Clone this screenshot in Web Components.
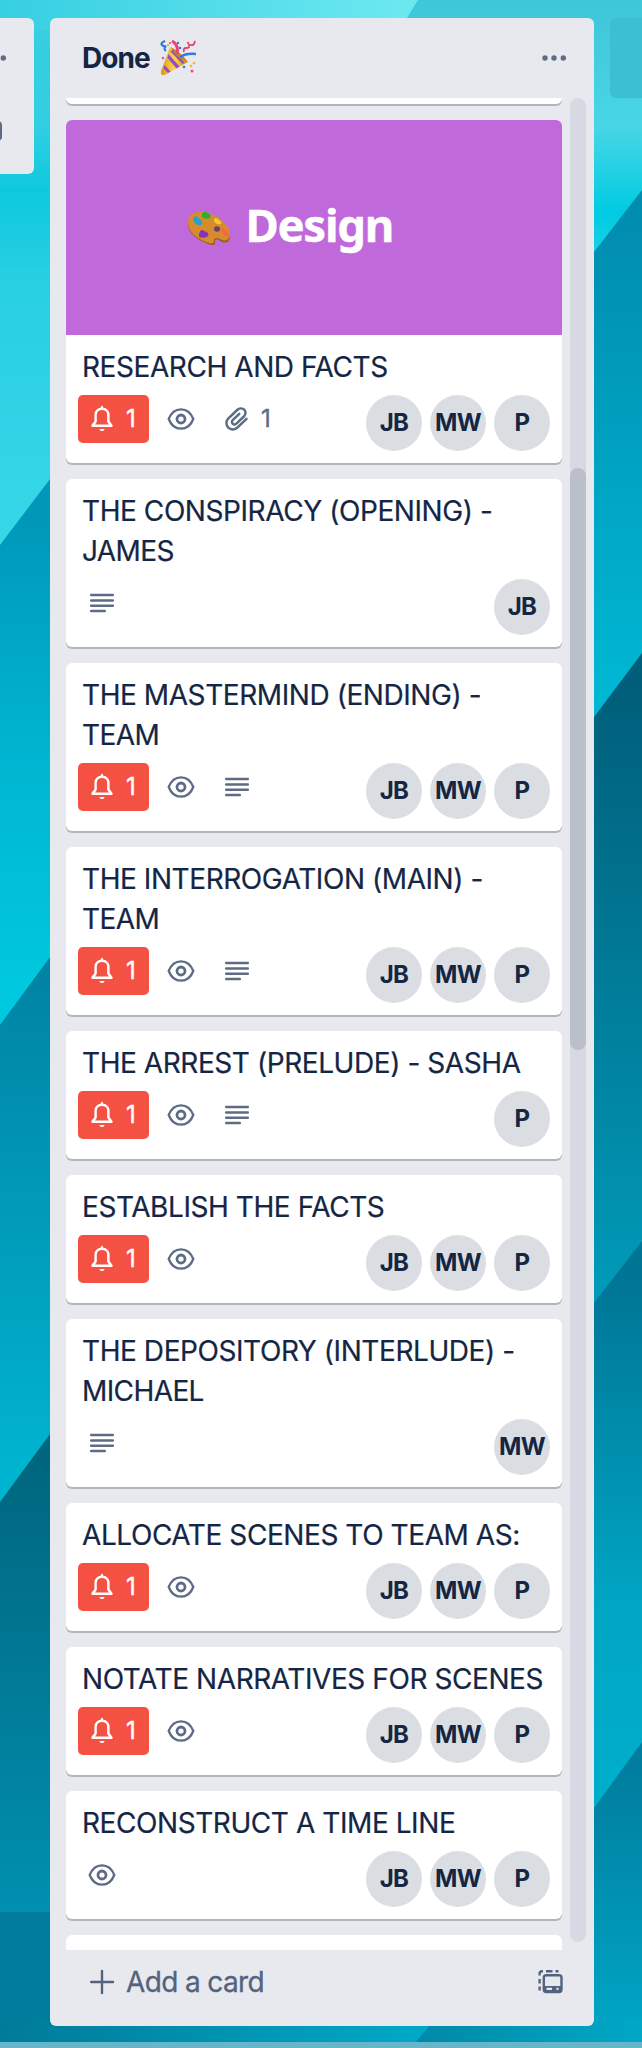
<!DOCTYPE html>
<html lang="en">
<head>
<meta charset="utf-8">
<title>Done list</title>
<style>
html,body{margin:0;padding:0}
body{width:642px;height:2048px;overflow:hidden;font-family:Inter,"Liberation Sans",sans-serif;color:#142644}
</style>
</head>
<body>
<board-view>
  <list-edge></list-edge>
  <board-list heading="Done">
    <board-card blank></board-card>
    <board-card cover="Design" lines="RESEARCH AND FACTS" badges="bell eye clip" members="JB MW P"></board-card>
    <board-card lines="THE CONSPIRACY (OPENING) -|JAMES" badges="text" members="JB"></board-card>
    <board-card lines="THE MASTERMIND (ENDING) -|TEAM" badges="bell eye text" members="JB MW P"></board-card>
    <board-card lines="THE INTERROGATION (MAIN) -|TEAM" badges="bell eye text" members="JB MW P"></board-card>
    <board-card lines="THE ARREST (PRELUDE) - SASHA" badges="bell eye text" members="P"></board-card>
    <board-card lines="ESTABLISH THE FACTS" badges="bell eye" members="JB MW P"></board-card>
    <board-card lines="THE DEPOSITORY (INTERLUDE) -|MICHAEL" badges="text" members="MW"></board-card>
    <board-card lines="ALLOCATE SCENES TO TEAM AS:" badges="bell eye" members="JB MW P"></board-card>
    <board-card lines="NOTATE NARRATIVES FOR SCENES" badges="bell eye" members="JB MW P"></board-card>
    <board-card lines="RECONSTRUCT A TIME LINE" badges="eye" members="JB MW P"></board-card>
    <board-card blank></board-card>
  </board-list>
  <add-list></add-list>
</board-view>
<script>
const icons = {
  bell:`<svg width="32" height="32" viewBox="0 0 32 32" fill="none" stroke="currentColor" stroke-width="2.400" stroke-linejoin="round" stroke-linecap="round"><path d="M16 4.300v1.400M6.500 22.800h19L22.400 18.500V11.600C22.400 8 19.600 5.700 16 5.700S9.600 8 9.600 11.600V18.500Z"/><path d="M13.400 26h5.200c-.5 1.500-1.400 2-2.600 2s-2.100-.5-2.600-2Z" fill="currentColor" stroke="none"/></svg>`,
  eye:`<svg width="32" height="32" viewBox="0 0 32 32" fill="none" stroke="currentColor"><path d="M3.700 16C6 10 10.500 6.300 16 6.300S26 10 28.300 16C26 22 21.500 25.700 16 25.700S6 22 3.700 16Z" stroke-width="2.300"/><circle cx="16" cy="16" r="4" stroke-width="2.800"/></svg>`,
  text:`<svg width="32" height="32" viewBox="0 0 32 32" fill="none" stroke="currentColor" stroke-width="2.500" stroke-linecap="round"><path d="M5.200 8h21.600M5.200 13.400h21.600M5.200 18.700h21.600M5.200 24h13.600"/></svg>`,
  clip:`<svg width="32" height="32" viewBox="0 0 32 32" fill="none" stroke="currentColor" stroke-width="2.500" stroke-linecap="round"><path d="M25.500 15.800L16.600 24.300C14 27 9.800 27.200 7.300 24.700S4.700 18 7.400 15.400L16.200 7C18.200 5.100 21.200 4.800 23.200 6.600S24.800 11.600 22.900 13.500L15.400 20.600C14.200 21.700 12.600 21.700 11.600 20.700S10.700 18 11.900 16.900L18.300 10.800"/></svg>`
};
const define = (name, render) => customElements.define(name, class extends HTMLElement {
  connectedCallback(){ if(!this.shadowRoot) this.attachShadow({mode:'open'}).innerHTML = render(this); }
});

define('board-view', () => `
<style>
:host{display:block;position:relative;width:642px;height:2048px;overflow:hidden;isolation:isolate}
.bg{position:absolute;inset:0;z-index:-1;display:block}
.row{display:grid;grid-template-columns:34px 544px 32px;column-gap:16px;padding-top:18px;align-items:start}
</style>
<svg class="bg" width="642" height="2048" viewBox="0 0 642 2048" preserveAspectRatio="none">
<defs>
<linearGradient id="t" gradientUnits="userSpaceOnUse" x1="0" x2="642" y1="0" y2="0"><stop offset="0" stop-color="#36cfe2"/><stop offset=".62" stop-color="#6be8f0"/><stop offset="1" stop-color="#5fe0ea"/></linearGradient>
<linearGradient id="a" gradientUnits="userSpaceOnUse" x1="0" x2="0" y1="0" y2="560"><stop stop-color="#38cee0"/><stop offset=".22" stop-color="#32cfe2"/><stop offset=".34" stop-color="#0ec9de"/><stop offset=".5" stop-color="#28cfe2"/><stop offset="1" stop-color="#38d8e8"/></linearGradient>
<linearGradient id="b" gradientUnits="userSpaceOnUse" x1="0" x2="0" y1="510" y2="980"><stop stop-color="#0097b9"/><stop offset=".5" stop-color="#00b4d0"/><stop offset="1" stop-color="#00c8de"/></linearGradient>
<linearGradient id="c" gradientUnits="userSpaceOnUse" x1="0" x2="0" y1="980" y2="1470"><stop stop-color="#0084a4"/><stop offset="1" stop-color="#00b4d0"/></linearGradient>
<linearGradient id="d" gradientUnits="userSpaceOnUse" x1="0" x2="0" y1="1460" y2="1912"><stop stop-color="#00667f"/><stop offset="1" stop-color="#0090b0"/></linearGradient>
<linearGradient id="e" gradientUnits="userSpaceOnUse" x1="0" x2="0" y1="0" y2="250"><stop stop-color="#3ec6d9"/><stop offset=".5" stop-color="#48d6e6"/><stop offset=".85" stop-color="#00cbe2"/><stop offset="1" stop-color="#18d0e5"/></linearGradient>
<linearGradient id="f" gradientUnits="userSpaceOnUse" x1="0" x2="0" y1="220" y2="700"><stop stop-color="#008db0"/><stop offset="1" stop-color="#00b8d4"/></linearGradient>
<linearGradient id="g" gradientUnits="userSpaceOnUse" x1="0" x2="0" y1="680" y2="1290"><stop stop-color="#005e7a"/><stop offset="1" stop-color="#009ab8"/></linearGradient>
<linearGradient id="h" gradientUnits="userSpaceOnUse" x1="0" x2="0" y1="1270" y2="1790"><stop stop-color="#007494"/><stop offset=".65" stop-color="#00a6c4"/><stop offset="1" stop-color="#00aecb"/></linearGradient>
<linearGradient id="i" gradientUnits="userSpaceOnUse" x1="0" x2="0" y1="1770" y2="2048"><stop stop-color="#007e9f"/><stop offset="1" stop-color="#00a8c8"/></linearGradient>
<linearGradient id="j" x2="1"><stop stop-color="#007b99"/><stop offset="1" stop-color="#00aac9"/></linearGradient>
<linearGradient id="k" x2="1"><stop stop-color="#0088a7"/><stop offset="1" stop-color="#00a8c6"/></linearGradient>
</defs>
<path fill="url(#a)" d="M0 0H420V560H0Z"/><path fill="url(#t)" d="M0 0H418L400 30H0Z"/>
<path fill="url(#b)" d="M0 545L50 479H100V1040H0Z"/>
<path fill="url(#c)" d="M0 1025L50 957H100V1520H0Z"/>
<path fill="url(#d)" d="M0 1502L50 1434H100V1914H0Z"/>
<path fill="#007d9c" d="M0 1912H320V2048H0Z"/>
<path fill="url(#e)" d="M418 0H642V300H400V30Z"/>
<path fill="url(#f)" d="M594 252L642 190V730H590V257Z"/>
<path fill="url(#g)" d="M594 717L642 653V1320H590V722Z"/>
<path fill="url(#h)" d="M594 1303L642 1241V1830H590V1308Z"/>
<path fill="url(#i)" d="M594 1808L642 1742V2048H590V1813Z"/>
<path fill="url(#j)" d="M0 2020H440V2048H0Z"/><path fill="url(#k)" d="M434 2020H642V2048H411Z"/>
<path fill="#66b5c9" d="M0 2042H642V2048H0Z"/>
</svg>
<div class="row"><slot></slot></div>`);

define('list-edge', () => `
<style>
:host{display:flex;flex-direction:column;width:34px;height:156px;background:#e8e9ee;border-radius:0 6px 6px 0;overflow:hidden}
svg{display:block}
</style>
<svg width="34" height="156" viewBox="0 0 34 156" fill="#5d6b84"><circle cx="3.300" cy="40" r="2.700"/><path d="M0 103.500Q2 104 2 107V119Q2 122 0 122.500Z"/></svg>`);

define('add-list', () => `
<style>:host{display:block;width:40px;height:80px;border-radius:6px;background:#3cbfd1}</style>`);

define('board-list', el => `
<style>
:host{display:grid;grid-template-rows:80px 1852px 76px;width:544px;height:2008px;background:#e8e9ee;border-radius:6px;overflow:hidden}
header{display:flex;align-items:center;padding:0 26px 0 32px}
h2{margin:0;font-size:28px;line-height:40px;font-weight:700;letter-spacing:-.9px;width:69px;white-space:nowrap}
.party{margin-left:9px;margin-top:-1px}
.dots{margin-left:auto}
.body{display:grid;grid-template-columns:496px 16px;column-gap:8px;padding-left:16px;overflow:hidden;align-items:start}
.cards{display:flex;flex-direction:column;gap:16px;height:1852px;overflow:hidden}
.track{height:1844px;border-radius:8px;background:#d6d9e1;display:grid;padding-top:370px;box-sizing:border-box;align-items:start}
.thumb{height:582px;border-radius:8px;background:#babfc9}
footer{display:flex;align-items:flex-start;padding:18px 31px 0 38px;color:#52637e}
.add{font-size:28px;line-height:28px;margin-left:10px;white-space:nowrap;letter-spacing:-.62px;-webkit-text-stroke:.3px currentColor}
.tpl{margin-left:auto}
</style>
<header><h2>${el.getAttribute('heading')}</h2>
<svg class="party" role="img" aria-label="party popper" width="36" height="36" viewBox="0 0 36 36">
<defs><linearGradient id="y" x2="1"><stop stop-color="#d99a20"/><stop offset=".5" stop-color="#ffd44a"/><stop offset="1" stop-color="#c98816"/></linearGradient></defs>
<path d="M10 7Q18 10 28 22L5 35Q0 36 1 31Z" fill="url(#y)"/>
<path d="M8.500 14L19.500 26.500L16.500 28.500L7.500 18ZM4.500 25L10.500 31.500L8 33L3.500 28.500ZM12.500 9.500L24.500 22.500L22.500 24L10.500 11.500Z" fill="#984dc4"/>
<path d="M11 7Q20 12 27 21Q21 20 15 14Z" fill="#c48425"/>
<path d="M12 1Q19 5 17 14" fill="none" stroke="#ec426f" stroke-width="3"/>
<path d="M20 17Q26 13 36 14" fill="none" stroke="#3978df" stroke-width="2.600"/>
<path d="M5 1Q0 3 2 5T6 6Q3 9 6 11" fill="none" stroke="#2874db" stroke-width="2"/>
<path d="M24 12Q23 8 26 8T29 7Q28 4 31 5T35 1" fill="none" stroke="#e5436b" stroke-width="1.800"/>
<g fill="#ef4d79"><circle cx="3" cy="18" r="1.200"/><circle cx="28" cy="3" r="1.200"/><circle cx="32" cy="31" r="1.500"/><circle cx="10" cy="3" r="1"/></g><g fill="#2878df"><circle cx="18" cy="3" r="1.200"/><circle cx="20" cy="8" r="1.300"/><circle cx="24" cy="27" r="1.300"/></g><g fill="#ffac40"><circle cx="31" cy="26" r="1.300"/><circle cx="34" cy="23" r="1.300"/><circle cx="8" cy="5" r="1.200"/></g>
</svg>
<svg class="dots" width="28" height="8" viewBox="0 0 28 8" fill="#5d6b84"><circle cx="5" cy="4" r="2.700"/><circle cx="14" cy="4" r="2.700"/><circle cx="23.300" cy="4" r="2.700"/></svg></header>
<div class="body"><div class="cards"><slot></slot></div><div class="track"><div class="thumb"></div></div></div>
<footer><svg width="28" height="28" viewBox="0 0 28 28" fill="none" stroke="currentColor" stroke-width="2.400" stroke-linecap="round"><path d="M3.200 14H25M14 3V25"/></svg><span class="add">Add a card</span>
<svg class="tpl" width="26" height="28" viewBox="0 0 26 28" fill="none" stroke="currentColor" stroke-width="2.400"><path d="M2.600 7.500V5.500Q2.600 3.200 5 3.200H6M9 3.200H15.500M18.500 3.200H21.500M2.600 11V15.500M2.600 18.500V22.500"/><rect x="6.800" y="7.300" width="17.700" height="16.700" rx="2.500"/><path d="M6.800 18H24.500V23.500H6.800Z" fill="currentColor" stroke="none"/><path d="M9.500 20.800H15M19.500 20.800H21.500" stroke="#e8e9ee" stroke-width="2.200"/></svg></footer>`);

define('board-card', el => {
  const first = !el.previousElementSibling;
  if (el.hasAttribute('blank')) return `<style>:host{display:block;flex:none;height:${first?6:128}px;background:#fff;border-radius:${first?'0 0 6px 6px':'6px'};box-shadow:0 2px 0 #b0b5bf}</style>`;
  const cover = el.getAttribute('cover');
  return `
<style>
:host{display:block;flex:none;background:#fff;border-radius:6px;box-shadow:0 2px 0 #b0b5bf}
.cover{height:215px;background:#bf69da;border-radius:6px 6px 0 0;display:flex;align-items:center;padding-left:121px;box-sizing:border-box;color:#fff}
.cover b{font:700 45.500px/60px "Noto Sans","Open Sans",sans-serif;letter-spacing:-1.300px;margin-left:14.500px;margin-top:-8px;-webkit-text-stroke:.4px #fff}
.content{padding:12px}
.title{font-size:28px;line-height:40px;padding-left:4px;white-space:nowrap;letter-spacing:-.43px;-webkit-text-stroke:.2px currentColor}
.title span{display:block}
.title span+span{letter-spacing:-.6px}
.meta{display:flex;justify-content:space-between;align-items:flex-start;margin-top:8px;height:56px}
.badges,.members{display:flex;gap:8px}
</style>
${cover?`<div class="cover"><svg role="img" aria-label="artist palette" width="44" height="35" viewBox="0 0 44 35" preserveAspectRatio="none"><path d="M1 14C1 4 12 0 24 5C37 10 43 20 43 26C43 33 38 34 33 31C30 29 28 29 28 32C29 36 25 36 19 33C8 29 1 22 1 14Z" fill="#9c611d"/><path d="M1 12C1 3 12 -1 24 4C37 9 43 18 43 24C43 30 38 32 33 29C30 27 26 28 27 31C27 34 24 34 19 32C8 28 1 21 1 12Z" fill="#d58b2e"/><ellipse cx="30" cy="19" rx="3" ry="2.700" fill="#6c3d70"/><path d="M7 7Q9 5 11 8Q16 10 15 14Q12 17 8 13Q5 10 7 7Z" fill="#20a2d3"/><path d="M15 4Q18 0 20 3Q25 4 23 8Q18 10 15 7Z" fill="#26b32b"/><path d="M27 9Q30 7 32 10Q35 12 34 14Q29 15 27 11Z" fill="#f6c72e"/><path d="M12 24Q14 18 17 21Q23 23 21 26Q18 29 12 27Z" fill="#8535ad"/><path d="M34 19Q38 18 41 24Q42 27 39 26Q35 24 34 19Z" fill="#fb6249"/></svg><b>${cover}</b></div>`:''}
<div class="content">
<div class="title">${el.getAttribute('lines').split('|').map(l=>`<span>${l}</span>`).join('')}</div>
<div class="meta"><div class="badges">${el.getAttribute('badges').split(' ').map(b=>`<card-badge icon="${b}"></card-badge>`).join('')}</div>
<div class="members">${el.getAttribute('members').split(' ').map(m=>`<member-avatar>${m}</member-avatar>`).join('')}</div></div>
</div>`;
});

define('card-badge', el => {
  const k = el.getAttribute('icon'), n = k==='bell'||k==='clip';
  return `
<style>
:host{display:flex;align-items:center;box-sizing:border-box;height:48px;width:${n?71:48}px;padding:0 8px;border-radius:5px;font-size:24px;line-height:40px;color:#5d6b84;${k==='bell'?'background:#f55142;color:#fff;':''}}
svg{display:block;flex:none}
span{margin-left:8px;-webkit-text-stroke:.4px currentColor}
</style>${icons[k]}${n?'<span>1</span>':''}`;
});

define('member-avatar', () => `
<style>:host{display:flex;align-items:center;justify-content:center;width:56px;height:56px;border-radius:50%;background:#dadde2;font-size:24px;line-height:56px;font-weight:700;letter-spacing:-.6px}</style><slot></slot>`);
</script>
</body>
</html>
